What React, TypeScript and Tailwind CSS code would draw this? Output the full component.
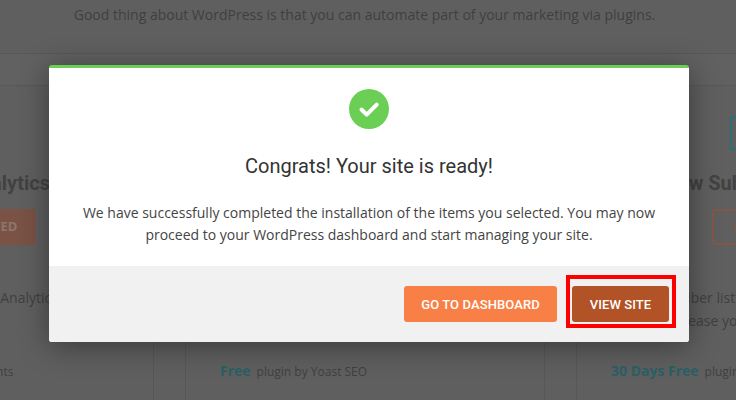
export default function App() {
  return (
    <div className="relative h-[400px] w-[736px] overflow-hidden bg-[#5f5f5f] font-['Open_Sans',sans-serif] text-[#3f3f3f]">
      {/* Page behind the dialog (already dimmed) */}
      <div className="flex h-[53px] items-start justify-center pt-[5px] pr-[7px] text-[14px] leading-[20px]">
        Good thing about WordPress is that you can automate part of your marketing via plugins.
      </div>
      <div className="h-[33px] border-t border-b border-[#585858] bg-[#616161]" />
      <div className="ml-[-206px] flex w-[1200px] gap-[31px]">
        <Card
          title="Google Analytics"
          button="ACTIVATED"
          filled
          lines={["Connect sites with Google Analytics", ""]}
          bottom={<><b className="text-[14px] font-bold text-[#2a5f65]">Free</b><span className="ml-[6px] text-[12px]">plugin by Google Accounts</span></>}
        />
        <Card
          title="Yoast SEO"
          button="ACTIVATED"
          filled
          lines={["", ""]}
          bottom={<><b className="text-[14px] font-bold text-[#2a5f65]">Free</b><span className="ml-[6px] text-[12px]">plugin by Yoast SEO</span></>}
        />
        <Card
          title="Grow Subscriber Base"
          button="SELECT"
          icon
          lines={["Your subscriber list", "and will increase your"]}
          bottom={<><b className="text-[14px] font-bold text-[#2a5f65]">30 Days Free</b><span className="ml-[6px] text-[12px]">plugin by OptinMonster</span></>}
        />
      </div>

      {/* Dialog */}
      <div className="absolute inset-0 flex justify-center pt-[65px] pl-[2px]">
        <div className="h-[277px] w-[640px] overflow-hidden rounded-[3px] border-t-[3px] border-[#6ccf55] bg-white shadow-[0_4px_30px_rgba(0,0,0,0.4)]">
          <div className="flex h-[198px] flex-col items-center pt-[21px] text-center">
            <svg width="40" height="40" viewBox="0 0 40 40" aria-hidden="true">
              <circle cx="20" cy="20" r="20" fill="#6ccf55" />
              <path d="M12.5 20.5l5.2 5.2 10-10" fill="none" stroke="#fff" strokeWidth="4" strokeLinecap="round" strokeLinejoin="round" />
            </svg>
            <h2 className="mt-[21px] font-['Roboto',sans-serif] text-[20px] leading-[32px] text-[#333]">
              Congrats! Your site is ready!
            </h2>
            <p className="mt-[20px] text-[14px] leading-[22px] text-[#444]">
              We have successfully completed the installation of the items you selected. You may now
              <br />
              proceed to your WordPress dashboard and start managing your site.
            </p>
          </div>
          <div className="flex h-[76px] items-start justify-end gap-[15px] bg-[#f1f1f1] pt-[20px] pr-[20px] font-['Roboto',sans-serif] text-[13px] font-medium tracking-[0.1px] text-white">
            <button className="h-[36px] w-[153px] rounded-[3px] bg-[#f87f46] pt-[1px]">GO TO DASHBOARD</button>
            <div className="relative">
              <button className="h-[36px] w-[97px] rounded-[3px] bg-[#b15326] pt-[1px]">VIEW SITE</button>
              <div className="absolute top-[-11px] left-[-6px] h-[53px] w-[110px] border-[4px] border-[#ff0000]" />
            </div>
          </div>
        </div>
      </div>
    </div>
  );
}

function Card({
  title,
  button,
  filled,
  icon,
  lines,
  bottom,
}: {
  title: string;
  button: string;
  filled?: boolean;
  icon?: boolean;
  lines: string[];
  bottom: React.ReactNode;
}) {
  return (
    <div className="h-[315px] w-[360px] shrink-0 border-r border-l border-[#575757] text-center">
      <div className="mt-[30px] flex h-[34px] justify-center">
        {icon && (
          <svg width="52" height="34" viewBox="0 0 52 34" fill="none" stroke="#2c7077" strokeWidth="2" aria-hidden="true">
            <rect x="1" y="1" width="50" height="32" rx="2" />
          </svg>
        )}
      </div>
      <h3 className="mt-[19px] font-['Roboto',sans-serif] text-[20px] leading-[28px] font-bold whitespace-nowrap text-[#424242]">{title}</h3>
      <div className="mt-[12px] flex justify-center">
        {filled ? (
          <span className="ml-[16px] flex h-[36px] w-[108px] items-center justify-center rounded-[3px] bg-[#7a5246] text-[13px] font-bold text-[#8f756c]">
            {button}
          </span>
        ) : (
          <span className="ml-[-1px] flex h-[36px] w-[88px] items-center justify-center rounded-[3px] border-2 border-[#82574a] text-[13px] font-bold text-[#82574a]">
            {button}
          </span>
        )}
      </div>
      <div className="mt-[41px] h-[74px] pl-[33px] text-left text-[14px] leading-[23px]">
        {lines.map((l, i) => (
          <div key={i} className="h-[23px]">{l}</div>
        ))}
      </div>
      <div className="pl-[34px] text-left leading-[20px]">{bottom}</div>
    </div>
  );
}
